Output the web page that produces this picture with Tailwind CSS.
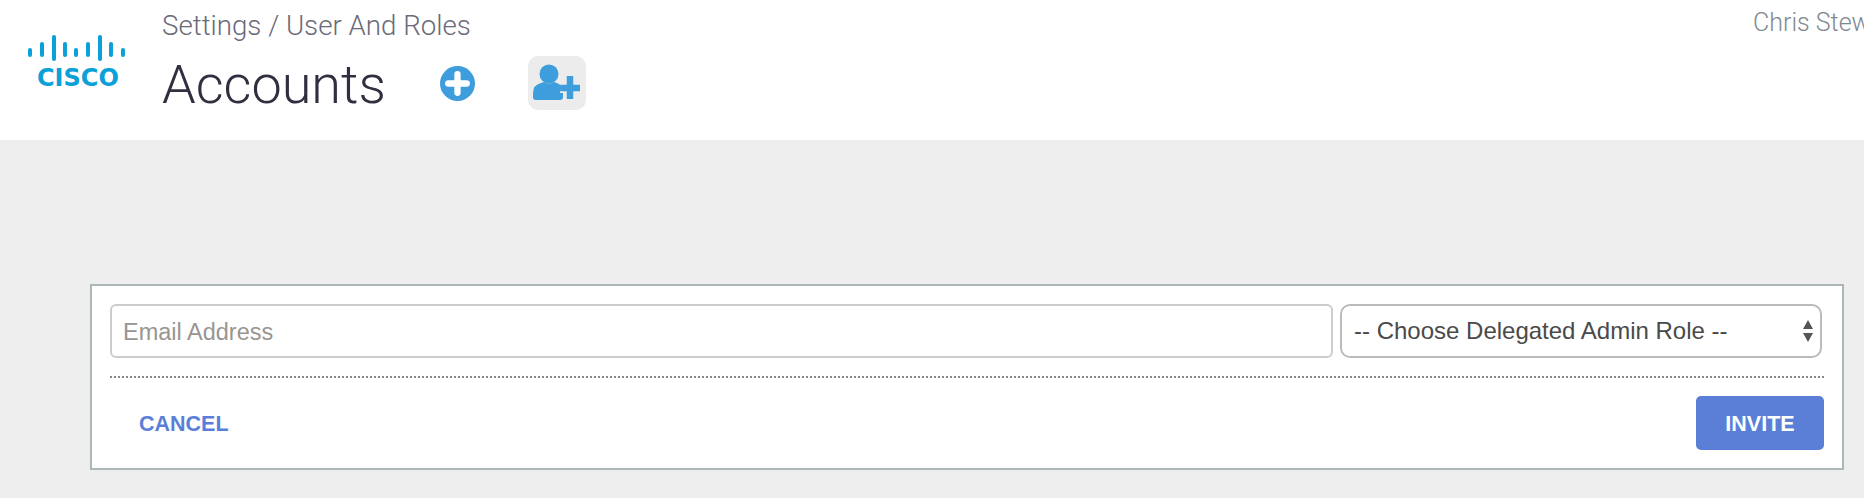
<!DOCTYPE html>
<html>
<head>
<meta charset="utf-8">
<script src="https://cdn.jsdelivr.net/npm/@tailwindcss/browser@4"></script>
</head>
<body class="w-[1864px] h-[498px] overflow-hidden bg-[#eeeeee] font-['Liberation_Sans',sans-serif]">
<header class="h-[140px] bg-white flex relative overflow-hidden">
  <div class="w-[162px] shrink-0 pt-[35px] pl-[28px]">
    <svg width="98" height="28" viewBox="0 0 98 28" class="block">
      <g fill="#0aa0d8">
        <rect x="0" y="13" width="4" height="9" rx="2"/>
        <rect x="12" y="7" width="4" height="15" rx="2"/>
        <rect x="24" y="0" width="4" height="26" rx="2"/>
        <rect x="35" y="7" width="4" height="15" rx="2"/>
        <rect x="46" y="13" width="4" height="9" rx="2"/>
        <rect x="58" y="7" width="4" height="15" rx="2"/>
        <rect x="70" y="0" width="4" height="26" rx="2"/>
        <rect x="81" y="7" width="4" height="15" rx="2"/>
        <rect x="93" y="13" width="4" height="9" rx="2"/>
      </g>
    </svg>
    <div class="ml-[9px] mt-[3px] text-[24px] leading-[25px] font-bold text-[#0aa0d8] font-['DejaVu_Sans',sans-serif]">CISCO</div>
  </div>
  <div class="pt-[11px]">
    <div class="text-[27.7px] leading-[30px] font-light text-[#6a6a78] font-['Roboto',sans-serif]">Settings / User And Roles</div>
    <div class="flex items-center mt-[15px] h-[54px]">
      <h1 class="w-[278px] text-[54px] leading-[60px] mt-[4px] font-light text-[#2f2f40] font-['Roboto',sans-serif]">Accounts</h1>
      <svg width="35" height="35" viewBox="0 0 36 36">
        <circle cx="18" cy="18" r="18" fill="#3e9ddc"/>
        <path d="M18 8.5v19M8.5 18h19" stroke="#fff" stroke-width="6.5" stroke-linecap="round"/>
      </svg>
      <div class="ml-[53px] w-[58px] h-[54px] rounded-[10px] bg-[#ececec] flex items-center justify-center">
        <svg width="50" height="38" viewBox="0 0 50 38">
          <circle cx="17" cy="10" r="9.5" fill="#3e9ddc"/>
          <path d="M1 33v-4q0-8 8-10l3-1q5 3 10 0l3 1q6 2 6 10v4q0 3-3 3H4q-3 0-3-3z" fill="#3e9ddc"/>
          <path d="M38 13v22M28 24h20" stroke="#ececec" stroke-width="10"/>
          <path d="M38 12v23M28 24h20" stroke="#3e9ddc" stroke-width="6.5"/>
        </svg>
      </div>
    </div>
  </div>
  <div class="absolute left-[1753px] top-[9px] whitespace-nowrap text-[25px] leading-[28px] font-light text-[#7f8a90] font-['Roboto',sans-serif]">Chris Stewart</div>
</header>
<main class="pt-[144px] pl-[90px]">
  <section class="w-[1754px] h-[186px] border-2 border-[#adb6b8] bg-white pt-[18px] pl-[18px] pr-[18px]">
    <div class="flex gap-[7px]">
      <input type="text" placeholder="Email Address" class="w-[1223px] h-[54px] border-2 border-[#cccccc] rounded-[6px] px-[11px] pt-[2px] text-[23.5px] outline-none placeholder:text-[#999590] bg-white">
      <div class="relative w-[482px] h-[54px]">
        <select class="appearance-none w-full h-full border-2 border-[#bbbbbb] rounded-[10px] pl-[12px] text-[24px] text-[#4a4a4a] bg-white outline-none">
          <option>-- Choose Delegated Admin Role --</option>
        </select>
        <svg width="12" height="24" viewBox="0 0 12 24" class="absolute right-[8px] top-[15px]">
          <path d="M6 1l5 9H1zM1 14h10l-5 9z" fill="#555555"/>
        </svg>
      </div>
    </div>
    <div class="mt-[18px] border-t-2 border-dotted border-[#888888]"></div>
    <div class="flex justify-between items-center mt-[18px]">
      <button class="ml-[29px] pt-[3px] text-[21.5px] font-bold text-[#5b7fd8]">CANCEL</button>
      <button class="w-[128px] h-[54px] pt-[3px] rounded-[5px] bg-[#5b7fd6] text-white text-[21.5px] font-bold">INVITE</button>
    </div>
  </section>
</main>
</body>
</html>
